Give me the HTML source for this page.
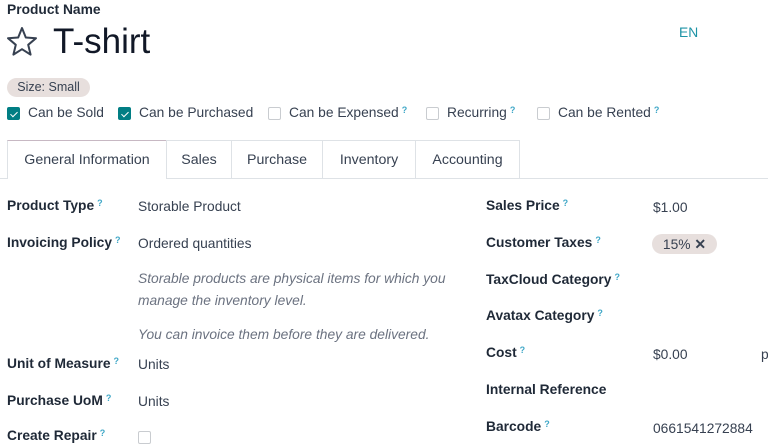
<!DOCTYPE html>
<html><head><meta charset="utf-8"><style>
body{margin:0;width:768px;height:440px;overflow:hidden;background:#fff;font-family:"Liberation Sans",sans-serif;font-size:13.8px;color:#374151;position:relative}
.a{position:absolute;white-space:nowrap;line-height:16px}
.b{font-weight:bold;color:#1f2937}
.q{color:#3fa7c7;font-size:9px;vertical-align:top;margin-left:3px;font-weight:bold;position:relative;top:-3px}
.cb{position:absolute;width:13px;height:13px;border:1px solid #c9ccd0;border-radius:2px;background:#fff;box-sizing:border-box}
.cb.on{background:#017e84;border-color:#017e84}
.cb.on::after{content:"";position:absolute;left:3.5px;top:1.5px;width:3px;height:6px;border:solid #fff;border-width:0 1.6px 1.6px 0;transform:rotate(45deg)}
.tab{position:absolute;top:140px;height:38px;box-sizing:border-box;border:1px solid #dee2e6;border-bottom:none;line-height:38px;text-align:center;color:#374151;font-size:14.2px}
.it{font-style:italic;color:#6b7280}
</style></head><body>
<div class="a b" style="left:7px;top:2px">Product Name</div>
<svg style="position:absolute;left:6px;top:26px" width="32" height="30" viewBox="0 0 32 30"><path d="M16 2 L19.8 11.5 L30 12.2 L22.2 18.8 L24.6 28.6 L16 23.2 L7.4 28.6 L9.8 18.8 L2 12.2 L12.2 11.5 Z" fill="none" stroke="#374151" stroke-width="2" stroke-linejoin="round"/></svg>
<div class="a" style="left:53px;top:22px;font-size:35px;line-height:40px;color:#111827">T-shirt</div>
<div class="a" style="left:679px;top:25px;color:#1d93a6">EN</div>
<div class="a" style="left:7px;top:78px;width:83px;height:19px;line-height:19px;border-radius:10px;background:#e7dfdd;text-align:center;font-size:12.5px">Size: Small</div>
<div class="cb on" style="left:7px;top:107px"></div><div class="a" style="left:28px;top:105px">Can be Sold</div>
<div class="cb on" style="left:118px;top:107px"></div><div class="a" style="left:139px;top:105px">Can be Purchased</div>
<div class="cb" style="left:268px;top:107px"></div><div class="a" style="left:289px;top:105px">Can be Expensed<span class="q">?</span></div>
<div class="cb" style="left:426px;top:107px"></div><div class="a" style="left:447px;top:105px">Recurring<span class="q">?</span></div>
<div class="cb" style="left:537px;top:107px"></div><div class="a" style="left:558px;top:105px">Can be Rented<span class="q">?</span></div>
<div style="position:absolute;left:0;right:0;top:178px;height:1px;background:#dee2e6"></div>
<div class="tab" style="left:7px;width:160px;border-top:1px solid #c7b8c3;background:#fff;height:39px">General Information</div>
<div class="tab" style="left:166px;width:66px">Sales</div>
<div class="tab" style="left:231px;width:92px">Purchase</div>
<div class="tab" style="left:322px;width:94px">Inventory</div>
<div class="tab" style="left:415px;width:105px">Accounting</div>
<div class="a b" style="left:7px;top:198px">Product Type<span class="q">?</span></div><div class="a" style="left:138px;top:199px">Storable Product</div>
<div class="a b" style="left:7px;top:235px">Invoicing Policy<span class="q">?</span></div><div class="a" style="left:138px;top:236px">Ordered quantities</div>
<div class="a it" style="left:138px;top:271px">Storable products are physical items for which you</div>
<div class="a it" style="left:138px;top:293px">manage the inventory level.</div>
<div class="a it" style="left:138px;top:327px">You can invoice them before they are delivered.</div>
<div class="a b" style="left:7px;top:356px">Unit of Measure<span class="q">?</span></div><div class="a" style="left:138px;top:357px">Units</div>
<div class="a b" style="left:7px;top:393px">Purchase UoM<span class="q">?</span></div><div class="a" style="left:138px;top:394px">Units</div>
<div class="a b" style="left:7px;top:428px">Create Repair<span class="q">?</span></div><div class="cb" style="left:138px;top:431px"></div>
<div class="a b" style="left:486px;top:198px">Sales Price<span class="q">?</span></div><div class="a" style="left:653px;top:200px">$1.00</div>
<div class="a b" style="left:486px;top:235px">Customer Taxes<span class="q">?</span></div>
<div class="a" style="left:652px;top:234px;width:65px;height:20px;line-height:20px;border-radius:10px;background:#e7dfdd;text-align:center">15% <b style="font-size:14px">✕</b></div>
<div class="a b" style="left:486px;top:272px">TaxCloud Category<span class="q">?</span></div>
<div class="a b" style="left:486px;top:308px">Avatax Category<span class="q">?</span></div>
<div class="a b" style="left:486px;top:345px">Cost<span class="q">?</span></div><div class="a" style="left:653px;top:347px">$0.00</div><div class="a" style="left:761px;top:347px">p</div>
<div class="a b" style="left:486px;top:382px">Internal Reference</div>
<div class="a b" style="left:486px;top:419px">Barcode<span class="q">?</span></div><div class="a" style="left:653px;top:421px">0661541272884</div>
</body></html>
